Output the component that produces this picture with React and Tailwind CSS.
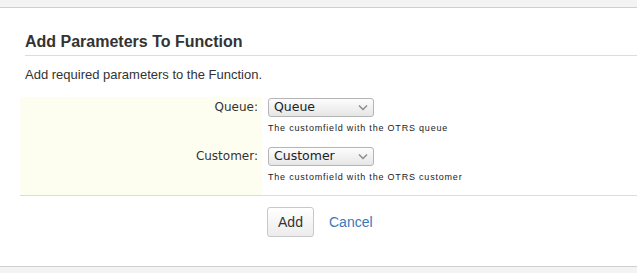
import React from 'react';

const fields = [
    { id: 'queue', label: 'Queue:', value: 'Queue', help: 'The customfield with the OTRS queue' },
    { id: 'customer', label: 'Customer:', value: 'Customer', help: 'The customfield with the OTRS customer' },
];

function FakeSelect({ value }) {
    return (
        <div className="flex items-center justify-between w-[106px] h-[19px] pl-[5px] pr-[5px] border border-[#b5b5b5] rounded-[3px] bg-gradient-to-b from-[#fdfdfd] to-[#e6e6e6] text-[12.5px] text-[#222] font-['DejaVu_Sans',sans-serif] leading-none">
            <span>{value}</span>
            <svg width="10" height="7" viewBox="0 0 10 7" className="text-[#8a8a8a]">
                <path d="M1 1.5 L5 5.5 L9 1.5" fill="none" stroke="currentColor" strokeWidth="1.4" />
            </svg>
        </div>
    );
}

export default function App() {
    return (
        <div className="w-[637px] h-[273px] bg-white flex flex-col font-['Liberation_Sans',Arial,sans-serif] text-[#333]">
            <div className="h-[8px] bg-[#f3f3f3] border-b border-[#cfcfcf]" />
            <div className="flex-1 pl-[20px]">
                <div className="ml-[5px] mt-[25px] pb-[4px] border-b border-[#dcdcdc]">
                    <h2 className="text-[16px] font-bold text-[#333] leading-[18px]">Add Parameters To Function</h2>
                </div>
                <p className="ml-[5px] mt-[12px] text-[13px] leading-[14px] text-[#333]">Add required parameters to the Function.</p>

                <div className="mt-[15px] border-b border-[#dcdcdc]">
                    {fields.map((f) => (
                        <div key={f.id} className="flex h-[49px]">
                            <div className="w-[242px] bg-[#fefef0] flex justify-end pr-[4px] pt-[3px]">
                                <label className="text-[12px] text-[#333] font-['DejaVu_Sans',sans-serif] leading-[14px]">{f.label}</label>
                            </div>
                            <div className="pl-[6px] pt-[1px]">
                                <FakeSelect value={f.value} />
                                <p className="mt-[6px] text-[9px] tracking-[0.8px] text-[#222] leading-[10px]">{f.help}</p>
                            </div>
                        </div>
                    ))}
                </div>

                <div className="flex items-center gap-[15px] pl-[247px] mt-[11px]">
                    <button className="w-[47px] h-[30px] border border-[#c8c8c8] rounded-[3px] bg-gradient-to-b from-[#ffffff] to-[#ececec] text-[14px] text-[#333]">Add</button>
                    <a className="text-[14px] text-[#3b79b9]">Cancel</a>
                </div>
            </div>
            <div className="h-[7px] bg-[#f3f3f3] border-t border-[#cfcfcf]" />
        </div>
    );
}
